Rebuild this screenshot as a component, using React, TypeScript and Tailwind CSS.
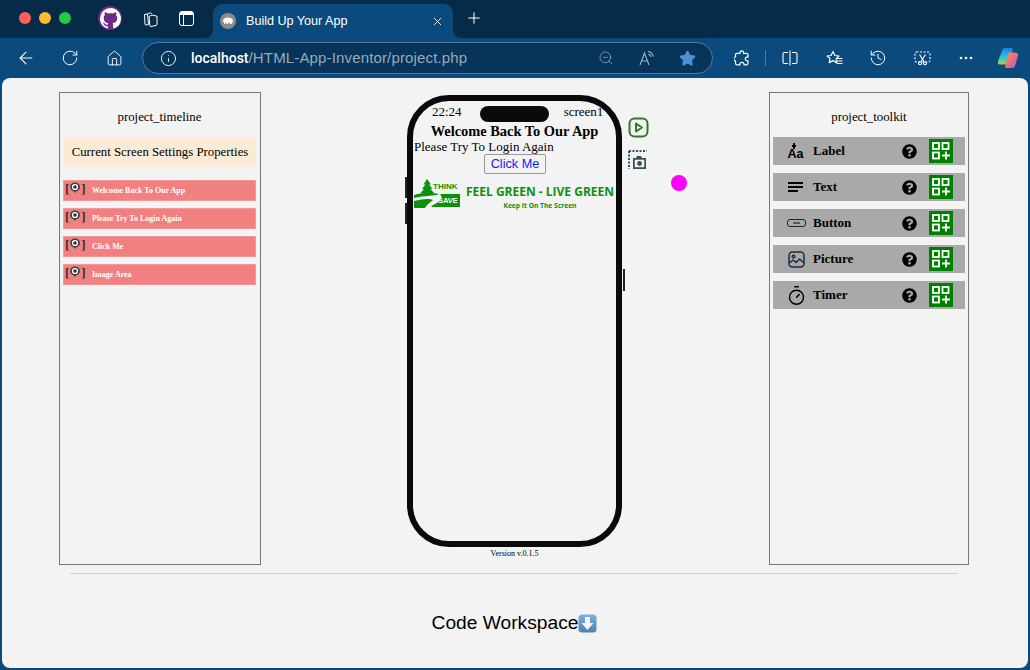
import React from "react";
import { ArrowLeft, RotateCw, Home, Info, ZoomOut, Star, History, X, Plus, Timer } from "lucide-react";
import { VscGithubInverted } from "react-icons/vsc";
import { FaQuestionCircle } from "react-icons/fa";

const serif = "font-['Liberation_Serif',serif]";

function ToolBtn({ children }: { children: React.ReactNode }) {
  return <div className="w-[44px] h-[40px] flex items-center justify-center shrink-0 text-white">{children}</div>;
}

function EyeBubble() {
  return (
    <svg width="12" height="12" viewBox="0 0 12 12" className="-mt-[2px]">
      <path d="M6 .5a5 5 0 0 1 5 4.600c0 2.600-2.200 4-4 4.400L6 11 5 9.500C3 9.100 1 7.700 1 5.100A5 5 0 0 1 6 .5z" fill="#444" />
      <circle cx="6" cy="5" r="3.100" fill="#fff" />
      <circle cx="6" cy="5" r="1.800" fill="#333" />
    </svg>
  );
}

function TimelineRow({ label }: { label: string }) {
  return (
    <div className="h-[21px] bg-[#f38080] border border-[#f49a9a] flex items-start pl-[1px]">
      <div className={`w-[27px] flex items-center text-[13px] leading-[13px] font-bold text-[#333] pt-[1px] ${serif}`}>
        <span>[</span>
        <EyeBubble />
        <span>]</span>
      </div>
      <span className={`text-[8px] leading-[19px] font-bold text-white ${serif}`}>{label}</span>
    </div>
  );
}

function GridPlus() {
  return (
    <div className="w-[24px] h-[24px] bg-[#008000] flex items-center justify-center">
      <svg width="20" height="20" viewBox="0 0 20 20" fill="none" stroke="#fff" strokeWidth="1.800">
        <rect x="2" y="2" width="6" height="6" />
        <rect x="11.500" y="2" width="6" height="6" />
        <rect x="2" y="11.500" width="6" height="6" />
        <path d="M11 14.500h8M15 10.500v8" />
      </svg>
    </div>
  );
}

function ToolRow({ icon, label }: { icon: React.ReactNode; label: string }) {
  return (
    <div className="h-[28px] bg-[#a9a9a9] flex items-center">
      <div className="w-[40px] flex items-center justify-center pl-[6px] text-black shrink-0">{icon}</div>
      <span className={`text-[13px] font-bold text-black flex-1 ${serif}`}>{label}</span>
      <FaQuestionCircle className="text-[15px] text-black mr-[12px]" />
      <div className="mr-[12px]"><GridPlus /></div>
    </div>
  );
}

export default function App() {
  return (
    <div className="w-[1030px] h-[670px] bg-[#0b4a7c] overflow-hidden flex flex-col font-['Liberation_Sans',sans-serif]">
      {/* title bar */}
      <div className="h-[38px] bg-[#062b49] flex items-center shrink-0">
        <div className="flex items-center gap-[8px] ml-[19px] mb-[2px]">
          <span className="w-[12px] h-[12px] rounded-full bg-[#fe5f57]" />
          <span className="w-[12px] h-[12px] rounded-full bg-[#febc2e]" />
          <span className="w-[12px] h-[12px] rounded-full bg-[#28c840]" />
        </div>
        <div className="ml-[27px] w-[24px] h-[24px] rounded-full bg-[#6b2a8c] flex items-center justify-center overflow-hidden mb-[2px]">
          <VscGithubInverted className="text-white text-[21px]" />
        </div>
        <svg className="ml-[20px] mb-[1px]" width="16" height="16" viewBox="0 0 16 16" fill="none" stroke="#fff" strokeWidth="1">
          <path d="M2.500 3.500l3-.5 1 10.500-2.500.5c-.6 0-1-.3-1-1z" />
          <path d="M5.300 3l3.200-1.300 1.200 1.300" />
          <path d="M7 5.500l3-1.500 5 1.200v8c0 .8-.4 1.200-1 1.300l-5 1c-.8 0-1.200-.4-1.200-1z" />
        </svg>
        <svg className="ml-[21px] mb-[2px]" width="15" height="15" viewBox="0 0 15 15" fill="none" stroke="#fff" strokeWidth="1">
          <rect x=".5" y=".5" width="14" height="14" rx="2.500" />
          <rect x="1" y="1" width="13" height="3" fill="#fff" stroke="none" />
          <path d="M4.500 4v10" />
        </svg>
        <div className="relative ml-[19px] self-end w-[240px] h-[34px] bg-[#0b4a7c] rounded-t-[9px] flex items-center pl-[7px] pr-[9px] text-white">
          <span className="absolute -left-[8px] bottom-0 w-[8px] h-[8px] bg-[#0b4a7c]"><span className="block w-full h-full bg-[#062b49] rounded-br-[8px]" /></span>
          <span className="absolute -right-[8px] bottom-0 w-[8px] h-[8px] bg-[#0b4a7c]"><span className="block w-full h-full bg-[#062b49] rounded-bl-[8px]" /></span>
          <svg width="16" height="16" viewBox="0 0 16 16" className="shrink-0">
            <circle cx="8" cy="8" r="8" fill="#8b8b8b" />
            <path d="M3 8c0-2.400 2-3.600 5-3.600s5 1.300 5 3.800c0 .8-.4 1.300-1 1.300 0 1-.2 1.600-.8 1.600H10V9.700H8V11H6.500V9.700H5V11H4V9c-.6 0-1-.4-1-1z" fill="#fff" />
          </svg>
          <span className="ml-[10px] text-[12.600px] flex-1">Build Up Your App</span>
          <X size={13} strokeWidth={1.600} />
        </div>
        <Plus className="ml-[12px] text-white mb-[2px]" size={18} strokeWidth={1.400} />
      </div>

      {/* toolbar */}
      <div className="h-[40px] flex items-center shrink-0 pl-[4px]">
        <ToolBtn><ArrowLeft size={20} strokeWidth={1.300} /></ToolBtn>
        <ToolBtn><RotateCw size={18} strokeWidth={1.300} /></ToolBtn>
        <ToolBtn><Home size={17} strokeWidth={1.300} /></ToolBtn>
        <div className="ml-[6px] w-[571px] h-[32px] rounded-full border border-[#56799a] bg-[#06345a] flex items-center pl-[17px] pr-[16px]">
          <Info size={17} strokeWidth={1.300} className="text-white shrink-0" />
          <span className="ml-[14px] text-[15px] tracking-[0.15px] text-[#9aa9b8] flex-1 whitespace-nowrap"><span className="text-white text-[14px] tracking-normal font-['Roboto',sans-serif] font-medium">localhost</span>/HTML-App-Inventor/project.php</span>
          <ZoomOut size={16} strokeWidth={1.200} className="text-[#9aa9b8] mr-[25px]" />
          <svg className="mr-[24px]" width="16" height="16" viewBox="0 0 16 16" fill="none" stroke="#a8b5c2" strokeWidth="1.100">
            <path d="M1 15L5.500 3 10 15M2.600 11h5.800" />
            <path d="M9 1.500c2.500.3 4.500 2 5.500 5M9.300 4.300c1.300.2 2.300 1 2.800 2.400" />
          </svg>
          <Star size={17} fill="#4b93d1" stroke="#4b93d1" />
        </div>
        <div className="ml-[6px]">
          <ToolBtn>
            <svg width="15" height="16" viewBox="0 0 15 16" fill="none" stroke="#fff" strokeWidth="1.200" strokeLinejoin="round">
              <path d="M6 2.500c0-2.300 3.500-2.300 3.500 0v.8h3c.8 0 1.500.6 1.500 1.500v2.400h-1c-2.300 0-2.300 3.500 0 3.500h1v2.600c0 .9-.7 1.500-1.500 1.500H10v-.6c0-2.500-4-2.500-4 0v.6H3c-1 0-1.500-.7-1.500-1.500v-2.500h-.2C-.7 10.500-.7 7 1.300 7h.2V4.800C1.500 4 2.200 3.300 3 3.300h3z" />
            </svg>
          </ToolBtn>
        </div>
        <div className="w-[1px] h-[16px] bg-[#56799a] ml-[2px] mr-[2px]" />
        <ToolBtn>
          <svg width="16" height="16" viewBox="0 0 16 16" fill="none" stroke="#fff" strokeWidth="1.100">
            <path d="M6 2.500H2.500a1.500 1.500 0 0 0-1.500 1.500v8a1.500 1.500 0 0 0 1.500 1.500H6M10 2.500h3.500A1.500 1.500 0 0 1 15 4v8a1.500 1.500 0 0 1-1.500 1.500H10M8 .5v15" />
          </svg>
        </ToolBtn>
        <ToolBtn>
          <svg width="18" height="17" viewBox="0 0 18 17" fill="none" stroke="#fff" strokeWidth="1.200" strokeLinejoin="round">
            <path d="M8 1.500l1.900 4 4.100.5-3 2.900.8 4.200L8 10.600 4.200 12.600 5 8.400 2 6l4.100-.5z" />
            <path d="M12 8.500h5.500M11.500 11h6M12 13.500h5.500" />
          </svg>
        </ToolBtn>
        <ToolBtn><History size={18} strokeWidth={1.300} /></ToolBtn>
        <ToolBtn>
          <svg width="17" height="15" viewBox="0 0 17 15" fill="none" stroke="#fff" strokeWidth="1.100">
            <rect x="1" y="1" width="15" height="10" rx="1.500" strokeDasharray="2 1.500" />
            <path d="M5.500 3.500l4.500 7M11.500 3.500l-4.500 7" />
            <circle cx="6" cy="12.300" r="1.500" />
            <circle cx="11" cy="12.300" r="1.500" />
          </svg>
        </ToolBtn>
        <ToolBtn>
          <svg width="14" height="4" viewBox="0 0 14 4" fill="#fff"><circle cx="2" cy="2" r="1.300" /><circle cx="7" cy="2" r="1.300" /><circle cx="12" cy="2" r="1.300" /></svg>
        </ToolBtn>
        <svg width="22" height="22" viewBox="0 0 22 22" className="shrink-0 ml-[9px]">
          <defs>
            <linearGradient id="cpA" x1="0" y1="0" x2="0" y2="1"><stop offset="0" stopColor="#1f7fe0" /><stop offset="0.600" stopColor="#35c5d5" /><stop offset="1" stopColor="#a8d040" /></linearGradient>
            <linearGradient id="cpB" x1="0" y1="0" x2="1" y2="1"><stop offset="0" stopColor="#f0a040" /><stop offset="0.500" stopColor="#ee6a80" /><stop offset="1" stopColor="#a860e0" /></linearGradient>
          </defs>
          <path d="M8 1h6c1.500 0 2.200 1 1.600 2.400L11 15c-.7 1.500-1.700 2.500-3.500 2.500H3C1 17.500.3 16 1 14.300L5.300 3C5.800 1.700 6.700 1 8 1z" fill="url(#cpA)" />
          <path d="M11 7.500c.4-1.200 1.300-2 2.600-2H18c2.300 0 3.500 1.400 2.900 3.400l-2.700 9.300C17.700 20 16.500 21 15 21H10c-1.500 0-2.200-1-1.600-2.500z" fill="url(#cpB)" />
        </svg>
      </div>

      {/* page */}
      <div className="w-[1026px] h-[590px] ml-[2px] bg-[#f3f3f3] rounded-[8px] flex flex-col shrink-0">
        <div className="flex items-start pl-[57px] pt-[14px] relative">
          {/* timeline */}
          <div className="w-[202px] h-[473px] border border-[#777] pl-[3px] pr-[4px] shrink-0">
            <div className={`text-center text-[12.800px] leading-[15px] text-black mt-[17px] ${serif}`}>project_timeline</div>
            <div className={`mt-[12px] ml-[1px] h-[30px] pt-[2px] bg-[#faebd7] flex items-center justify-center text-[12.800px] text-black ${serif}`}>Current Screen Settings Properties</div>
            <div className="mt-[13px] flex flex-col gap-[7px]">
              <TimelineRow label="Welcome Back To Our App" />
              <TimelineRow label="Please Try To Login Again" />
              <TimelineRow label="Click Me" />
              <TimelineRow label="Image Area" />
            </div>
          </div>

          {/* phone column */}
          <div className="ml-[146px] w-[215px] mt-[3px] shrink-0 flex flex-col items-center">
            <div className="relative w-[215px] h-[452px] rounded-[42px] border-[6.500px] border-[#0a0a0a] bg-[#f3f3f3]">
              <span className="absolute -left-[8.500px] top-[75.500px] w-[2px] h-[21px] bg-[#222]" />
              <span className="absolute -left-[8.500px] top-[101.500px] w-[2px] h-[21px] bg-[#222]" />
              <span className="absolute -right-[8.500px] top-[167.500px] w-[2px] h-[22px] bg-[#222]" />
              <div className={`h-[23px] pt-[3px] flex items-start text-[13px] leading-[15px] text-black ${serif}`}>
                <span className="ml-[19px]">22:24</span>
                <span className="ml-[18px] mt-[1.500px] w-[69px] h-[16px] rounded-full bg-[#0a0a0a]" />
                <span className="ml-[15px]">screen1</span>
              </div>
              <div className={`text-center text-[14.400px] font-bold leading-[16px] -mt-[1px] text-black ${serif}`}>Welcome Back To Our App</div>
              <div className={`text-[13px] leading-[15px] text-black pl-[1px] ${serif}`}>Please Try To Login Again</div>
              <div className="flex justify-center">
                <div className="w-[62px] h-[20px] ml-[1px] border border-[#999] rounded-[2px] bg-[#f3f3f3] text-[12.700px] leading-[18px] text-center text-[#1a1af0]">Click Me</div>
              </div>
              <div className="flex items-start mt-[4px] ml-[1px] w-[202px]">
                <svg width="46" height="31" viewBox="0 0 46 31" className="shrink-0" fill="#0a920a">
                  <path d="M13 1l4 5.500h-2l3.500 4.500h-2l4 4.500H6l4-4.500H8l3.500-4.500h-2z" />
                  <rect x="11.500" y="15" width="3" height="2" />
                  <path d="M0 17C8 14.500 18 14.500 25 16 22 18 10 17.500 0 20z" />
                  <path d="M0 23C8 21 15 20 19 22 16 25 12 27 11 30H0z" />
                  <path d="M26 16H46V29H17C19 26 25 25 27 21 28 19 27 17 26 16z" />
                  <text x="19" y="10.500" fontSize="8" fontWeight="700" fontFamily="Liberation Sans, sans-serif">THINK</text>
                  <text x="24" y="25" fontSize="7.500" fontWeight="700" fill="#fff" fontFamily="Liberation Sans, sans-serif">SAVE</text>
                </svg>
                <div className="flex-1 flex flex-col items-center text-[#0a920a] font-['Open_Sans',sans-serif] font-bold whitespace-nowrap pl-[4px]">
                  <span className="text-[12px] leading-[16px] mt-[6px]">FEEL GREEN - LIVE GREEN</span>
                  <span className="text-[6.700px] leading-[10px] mt-[1px]">Keep It On The Screen</span>
                </div>
              </div>
            </div>
            <div className={`text-[8px] leading-[10px] mt-[2px] text-black ${serif}`}>Version v.0.1.5</div>
          </div>

          {/* action icons */}
          <div className="ml-[6px] mt-[25px] flex flex-col gap-[12px] shrink-0 w-[22px]">
            <svg width="21" height="21" viewBox="0 0 21 21" fill="none" stroke="#2d7a22" strokeWidth="2">
              <rect x="1.500" y="1.500" width="18" height="18" rx="5" />
              <path d="M8 6.500l6 4-6 4z" strokeLinejoin="round" />
            </svg>
            <svg width="20" height="20" viewBox="0 0 20 20" fill="none">
              <path d="M1 1h18M1 1v18" stroke="#37505c" strokeWidth="2" strokeDasharray="2 1.500" />
              <path d="M5 8h3l1-2h4l1 2h4v11H5z" fill="#37505c" />
              <rect x="6.800" y="9.700" width="9.500" height="7.500" fill="#f3f3f3" />
              <circle cx="11.500" cy="13.500" r="2.400" fill="#37505c" />
            </svg>
          </div>
          <span className="absolute left-[669px] top-[97px] w-[16px] h-[16px] rounded-full bg-[#ff00ff]" />

          {/* toolkit */}
          <div className="ml-[119px] w-[200px] h-[473px] border border-[#777] shrink-0 px-[3px]">
            <div className={`text-center text-[12.800px] leading-[15px] text-black mt-[17px] ${serif}`}>project_toolkit</div>
            <div className="mt-[12px] flex flex-col gap-[8px]">
              <ToolRow label="Label" icon={
                <span className="relative flex flex-col items-center leading-none -ml-[1px]">
                  <svg width="7" height="6" viewBox="0 0 7 6" stroke="#000" strokeWidth="1.800"><path d="M2 0v6M0 3h4" /></svg>
                  <span className="text-[12.500px] font-bold font-['Liberation_Sans',sans-serif] leading-[10px]">Aa</span>
                </span>
              } />
              <ToolRow label="Text" icon={
                <svg width="16" height="10" viewBox="0 0 16 10" stroke="#000" strokeWidth="1.800"><path d="M0 1h15M0 5h15M0 9h10" /></svg>
              } />
              <ToolRow label="Button" icon={
                <svg width="19" height="8" viewBox="0 0 19 8" fill="none" stroke="#222" strokeWidth="1"><rect x=".5" y=".5" width="18" height="7" rx="2.500" /><path d="M6 4h7" strokeWidth="1.200" /></svg>
              } />
              <ToolRow label="Picture" icon={
                <svg width="17" height="17" viewBox="0 0 17 17" fill="none" stroke="#1e2a44" strokeWidth="1.500" strokeLinejoin="round">
                  <rect x="1" y="1" width="15" height="15" rx="3.500" />
                  <circle cx="5.500" cy="5.500" r="1.300" />
                  <path d="M1.500 12l3.500-3 3 2.500 3.500-3.500 4 3.500" />
                </svg>
              } />
              <ToolRow label="Timer" icon={<Timer size={21} strokeWidth={1.700} />} />
            </div>
          </div>
        </div>

        <div className="mt-[8px] ml-[68px] mr-[70px] h-[1px] bg-[#d0d0d0]" />
        <div className="mt-[38px] flex items-center justify-center text-[19.200px] leading-[22px] text-black -ml-[1px]">
          <span>Code Workspace</span>
          <svg width="19" height="19" viewBox="0 0 19 19">
            <defs>
              <linearGradient id="emo" x1="0" y1="0" x2="0" y2="1"><stop offset="0" stopColor="#7fb0de" /><stop offset="1" stopColor="#4d7fb0" /></linearGradient>
            </defs>
            <rect x=".5" y=".5" width="18" height="18" rx="3.500" fill="url(#emo)" />
            <path d="M7 3h5v6h3.500l-6 7-6-7H7z" fill="#f6f6f6" />
          </svg>
        </div>
      </div>
    </div>
  );
}
